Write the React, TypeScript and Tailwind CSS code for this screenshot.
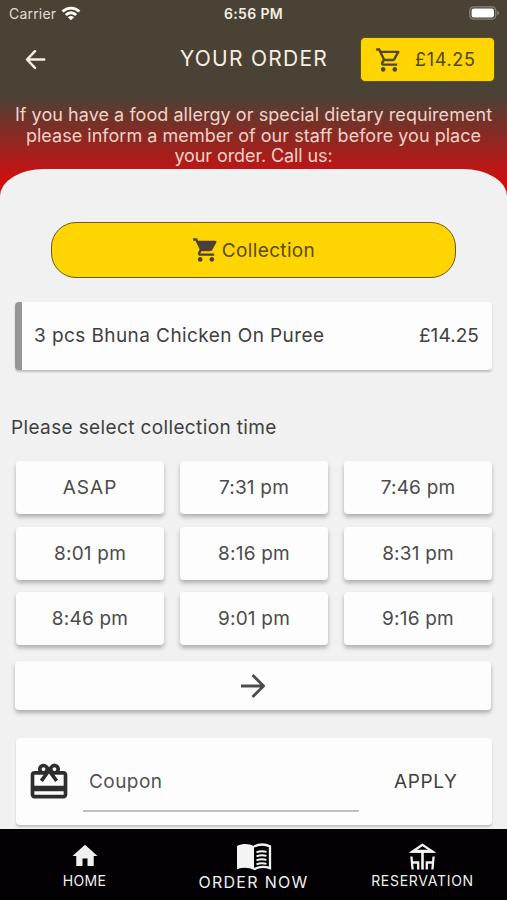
import { MdOutlineShoppingCart, MdShoppingCart, MdCardGiftcard, MdHome } from "react-icons/md";

const times = ["ASAP", "7:31 pm", "7:46 pm", "8:01 pm", "8:16 pm", "8:31 pm", "8:46 pm", "9:01 pm", "9:16 pm"];

function StatusBar() {
  return (
    <div className="flex h-[27px] items-center px-[9px] text-[14px] leading-none text-[#f3eee6]">
      <div className="flex flex-1 items-center gap-[5px]">
        <span className="tracking-[0.19px] text-[#e4ded5]">Carrier</span>
        <svg className="h-[15px] w-[20px]" viewBox="0 0 20 15" fill="none" stroke="#fffdf5" strokeWidth="2.8">
          <path d="M1.6 5.5a11.9 11.9 0 0 1 16.8 0M4.8 8.9a7.4 7.4 0 0 1 10.4 0" />
          <path d="M10 14.2 6.9 11.3a4.4 4.4 0 0 1 6.2 0z" fill="#fffdf5" stroke="none" />
        </svg>
      </div>
      <span className="font-semibold tracking-[0.35px]">6:56 PM</span>
      <div className="flex flex-1 items-center justify-end">
        <svg className="-mr-[2px] -mt-[1px] h-[14px] w-[31px]" viewBox="0 0 31 14">
          <rect x="0.8" y="0.8" width="26" height="12.4" rx="4" fill="none" stroke="#89847b" strokeWidth="1.3" />
          <rect x="2.6" y="2.6" width="22.4" height="8.8" rx="2.2" fill="#fff" />
          <path d="M28.3 4.7c2.4 1 2.4 3.6 0 4.6z" fill="#89847b" />
        </svg>
      </div>
    </div>
  );
}

function Header() {
  return (
    <div className="flex h-[66px] items-center pl-[25px] pr-3">
      <svg className="h-[20px] w-[21px]" viewBox="0 0 21 20" fill="none" stroke="#f8eee4" strokeWidth="2.5" strokeLinecap="round" strokeLinejoin="round">
        <path d="M10 1.2 2 9.5l8 8.3M2.4 9.5H19.2" />
      </svg>
      <h1 className="ml-[134px] flex-1 whitespace-nowrap pb-[3px] text-[21px] leading-none tracking-[1.25px] text-[#f8eee4]">YOUR ORDER</h1>
      <button className="-mt-[1px] flex h-[45px] w-[135px] items-center rounded-[5px] border border-[#5d5217] bg-[#fed500] pl-[14px] text-[#51451d]">
        <MdOutlineShoppingCart className="size-[28px]" />
        <span className="ml-3 text-[18px] leading-none tracking-[0.7px]">£14.25</span>
      </button>
    </div>
  );
}

function BookIcon() {
  return (
    <svg className="h-[28px] w-[36px]" viewBox="0 0 36 28">
      <path d="M1 3C7 .2 13 .5 18 3.2V27C13 24.3 7 24.1 1 26.2z" fill="#f4f4f4" />
      <path d="M18 3.6C23 1 29 1 34 3.4v21.8C29 23.4 23 23.6 18 26.2" fill="none" stroke="#f4f4f4" strokeWidth="2.3" />
      <path d="M20.5 9.3c3.5-1.5 6.5-1.5 10-.4M20.5 13.3c3.5-1.5 6.5-1.5 10-.4M20.5 17.3c3.5-1.5 6.5-1.5 10-.4M20.5 21.3c3.5-1.5 6.5-1.5 10-.4" fill="none" stroke="#f4f4f4" strokeWidth="2" />
    </svg>
  );
}

function ParasolIcon() {
  return (
    <svg className="h-[27px] w-[27px]" viewBox="0 0 27 27" fill="none" stroke="#f4f4f4">
      <path d="M13.5 1.8 3.5 8.6h20z" strokeWidth="2.3" />
      <path d="M0.8 9.7h25.4L22 6.8H5z" fill="#f4f4f4" stroke="none" />
      <path d="M13.5 8v18.5" strokeWidth="2.6" />
      <path d="M2.4 13.5 3.6 26.5M3 19.5h6.2v7M24.6 13.5 23.4 26.5M24 19.5h-6.2v7" strokeWidth="2.3" />
    </svg>
  );
}

export default function App() {
  return (
    <div className="flex h-[900px] w-[507px] flex-col overflow-hidden bg-[linear-gradient(to_bottom,#4a4235_0px,#4a4235_95px,#cd1010_180px,#d00c0c_200px)] font-['Inter','Liberation_Sans',sans-serif] text-[#3f3f3f]">
      <StatusBar />
      <Header />
      <p className="h-[76px] shrink-0 whitespace-nowrap pt-[12px] text-center text-[18px] leading-[20.7px] text-[#f1d3c9]">
        <span className="block tracking-[0.05px]">If you have a food allergy or special dietary requirement</span>
        <span className="block tracking-[0.03px]">please inform a member of our staff before you place</span>
        <span className="block tracking-[-0.1px]">your order. Call us:</span>
      </p>
      <main className="min-h-0 flex-1 overflow-hidden rounded-t-[44px_27px] bg-[#f1f1f1]">
        <button className="mx-auto mt-[53px] flex h-[56px] w-[405px] items-center justify-center rounded-[25px] border border-[#655b1e] bg-[#fed500] text-[#5a4a1b]">
          <MdShoppingCart className="size-[28px] text-[#4c3e38]" />
          <span className="ml-[2px] text-[19px] leading-none tracking-[0.35px]">Collection</span>
        </button>
        <section className="mx-[15px] mt-[24px] flex h-[68px] items-center justify-between rounded-[4px] border-l-[7px] border-[#969696] bg-[#fdfdfd] pb-[2px] pl-[12px] pr-[13px] text-[19px] leading-none shadow-[0_2px_2px_rgba(0,0,0,0.2)]">
          <span className="tracking-[0.42px]">3 pcs Bhuna Chicken On Puree</span>
          <span className="tracking-[0.08px]">£14.25</span>
        </section>
        <h2 className="ml-[11px] mt-[45px] text-[19px] leading-[26px] tracking-[0.37px]">Please select collection time</h2>
        <div className="ml-[16px] mr-[15px] mt-[20px] grid grid-cols-3 gap-x-[16px] gap-y-[12.5px]">
          {times.map((t) => (
            <button key={t} className="h-[53px] rounded-[4px] bg-[#fdfdfd] text-[19px] leading-none tracking-[0.2px] text-[#4b4b4b] shadow-[0_3px_4px_rgba(0,0,0,0.28)] first:tracking-[1px]">
              {t}
            </button>
          ))}
        </div>
        <button className="mx-[15px] mt-[16px] flex h-[49px] w-[476px] items-center justify-center rounded-[4px] bg-[#fdfdfd] shadow-[0_3px_4px_rgba(0,0,0,0.28)]">
          <svg className="h-[26px] w-[26px]" viewBox="0 0 26 26" fill="none" stroke="#4c4c4c" strokeWidth="2.8" strokeLinejoin="round">
            <path d="M1 13H23.5M12.5 2 23.6 13 12.5 24" />
          </svg>
        </button>
        <section className="ml-[16px] mr-[15px] mt-[28px] flex h-[87px] items-center rounded-[4px] bg-[#fdfdfd] pl-[11px] shadow-[0_2px_2px_rgba(0,0,0,0.2)]">
          <MdCardGiftcard className="size-[44px] text-[#2e2e2e]" />
          <div className="ml-[12px] flex h-full w-[276px] flex-col justify-end pb-[13px]">
            <div className="h-[43px] border-b-2 border-[#bec1be] pl-[6px] text-[19px] leading-[26px] tracking-[0.45px] text-[#525252]">Coupon</div>
          </div>
          <span className="ml-[35px] text-[19px] leading-none tracking-[0.66px]">APPLY</span>
        </section>
      </main>
      <nav className="grid h-[71px] shrink-0 grid-cols-3 bg-[#030103] text-[14px] leading-none text-[#f0f0f0]">
        <div className="flex flex-col items-center pt-[12px]">
          <MdHome className="size-[30px]" />
          <span className="mt-[3px] tracking-[0.3px]">HOME</span>
        </div>
        <div className="flex flex-col items-center pt-[14px]">
          <BookIcon />
          <span className="mt-[3px] text-[16px] tracking-[1.3px]">ORDER NOW</span>
        </div>
        <div className="flex flex-col items-center pt-[14px]">
          <ParasolIcon />
          <span className="mt-[4px] tracking-[0.72px]">RESERVATION</span>
        </div>
      </nav>
    </div>
  );
}
